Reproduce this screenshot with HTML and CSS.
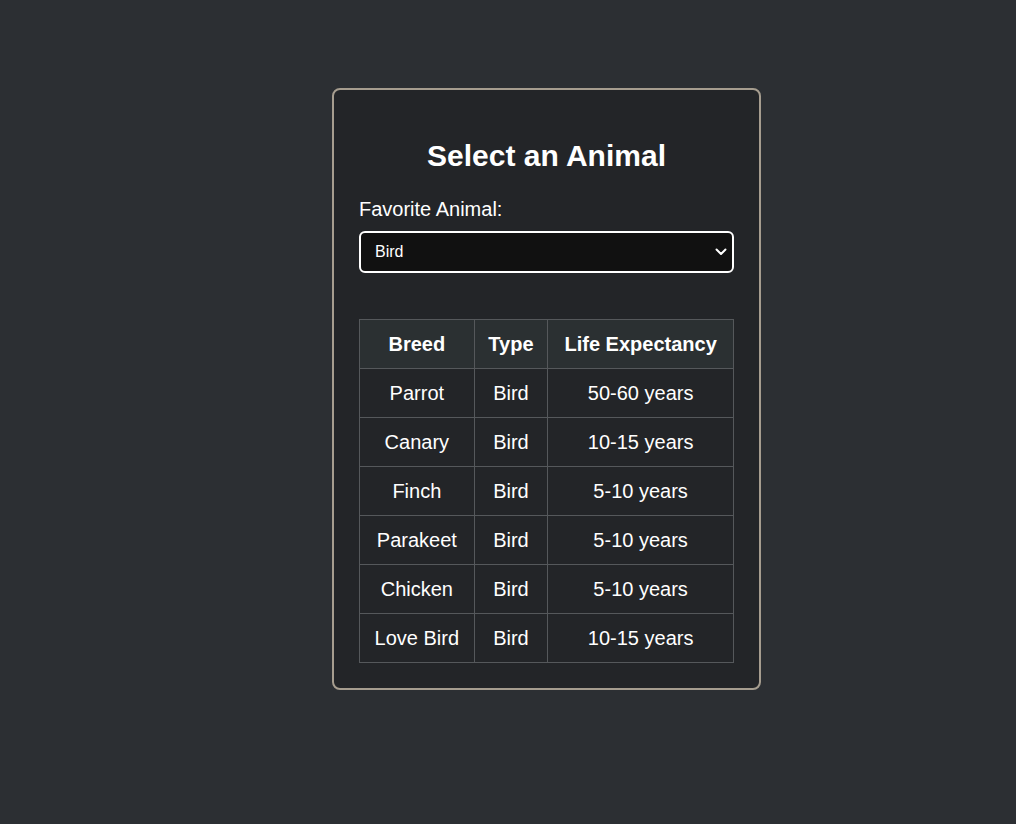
FILE: index.html
```html
<!DOCTYPE html>
<html lang="en">
<head>
<meta charset="utf-8">
<title>Select an Animal</title>
<link rel="stylesheet" href="styles.css">
</head>
<body>
<div class="card">
  <h1 class="title">Select an Animal</h1>
  <label class="label" for="animal">Favorite Animal:</label>
  <div class="select-wrap">
    <select id="animal" class="select">
      <option>Dog</option>
      <option>Cat</option>
      <option selected>Bird</option>
      <option>Fish</option>
    </select>
    <svg class="chevron" width="12" height="8" viewBox="0 0 12 8" aria-hidden="true">
      <path d="M1.5 1.5 L6 6 L10.5 1.5" fill="none" stroke="#ffffff" stroke-width="2" stroke-linecap="round" stroke-linejoin="round"/>
    </svg>
  </div>
  <table class="table">
    <thead>
      <tr><th>Breed</th><th>Type</th><th>Life Expectancy</th></tr>
    </thead>
    <tbody>
      <tr><td>Parrot</td><td>Bird</td><td>50-60 years</td></tr>
      <tr><td>Canary</td><td>Bird</td><td>10-15 years</td></tr>
      <tr><td>Finch</td><td>Bird</td><td>5-10 years</td></tr>
      <tr><td>Parakeet</td><td>Bird</td><td>5-10 years</td></tr>
      <tr><td>Chicken</td><td>Bird</td><td>5-10 years</td></tr>
      <tr><td>Love Bird</td><td>Bird</td><td>10-15 years</td></tr>
    </tbody>
  </table>
</div>
</body>
</html>
```
FILE: styles.css
```css
html, body {
  margin: 0;
  padding: 0;
  background: #2c2f33;
  color: #ffffff;
  font-family: "Liberation Sans", Arial, sans-serif;
}
body {
  padding: 88px 0 0 332px;
  min-height: 824px;
  box-sizing: border-box;
}
.card {
  width: 429px;
  box-sizing: border-box;
  background: #232528;
  border: 2px solid #a69d8f;
  border-radius: 8px;
  padding: 25px;
  display: flex;
  flex-direction: column;
}
.title {
  margin: 24px 0 24px;
  font-size: 30px;
  font-weight: bold;
  text-align: center;
  line-height: 34.5px;
}
.label {
  display: block;
  font-size: 20px;
  line-height: 23px;
  margin-bottom: 10px;
}
.select-wrap {
  position: relative;
  margin: 0 0 46px;
}
.select {
  display: block;
  -webkit-appearance: none;
  appearance: none;
  height: 42px;
  box-sizing: border-box;
  width: 100%;
  background: #111111;
  color: #ffffff;
  border: 2px solid #ffffff;
  border-radius: 6px;
  padding: 0 30px 0 14px;
  font-family: "Liberation Sans", Arial, sans-serif;
  font-size: 16px;
  margin: 0;
}
.chevron {
  position: absolute;
  right: 7px;
  top: 17px;
  pointer-events: none;
}
.table {
  width: 100%;
  border-collapse: collapse;
  font-size: 20px;
  line-height: 24px;
}
.table th, .table td {
  border: 1px solid #55585b;
  padding: 12px 12px;
  text-align: center;
  white-space: nowrap;
}
.table th {
  background: #2b3032;
  font-weight: bold;
}
```
